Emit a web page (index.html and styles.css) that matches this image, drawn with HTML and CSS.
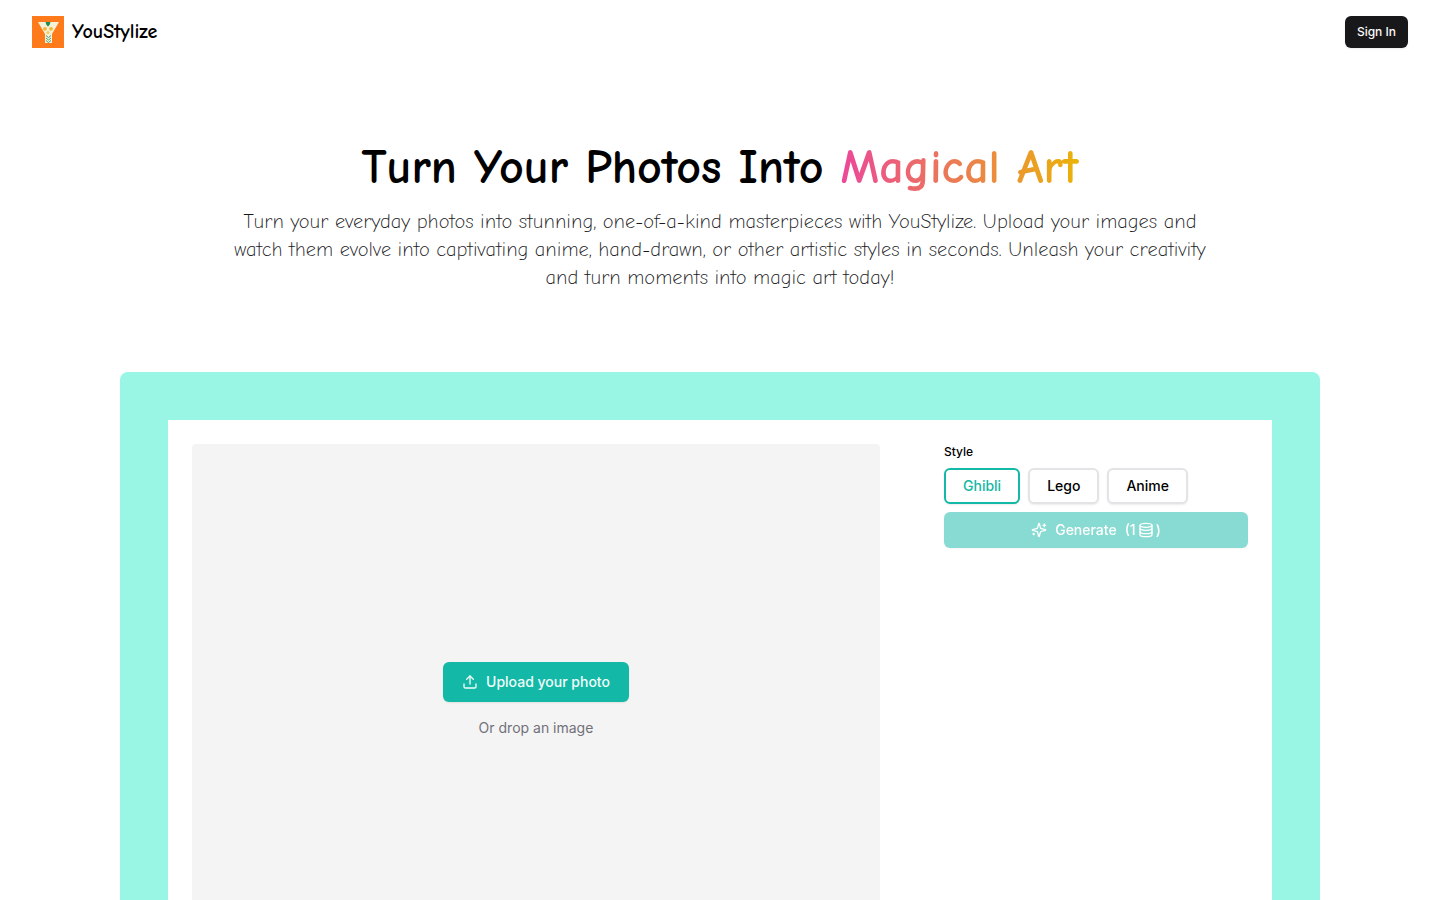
FILE: index.html
```html
<!DOCTYPE html>
<html lang="en">
<head>
  <meta charset="UTF-8">
  <meta name="viewport" content="width=device-width, initial-scale=1.0">
  <title>YouStylize</title>
  <link rel="stylesheet" href="styles.css">
</head>
<body>
  <header class="navbar">
    <a href="#" class="brand">
      <svg class="logo" viewBox="0 0 32 32" aria-hidden="true">
        <rect width="32" height="32" fill="#ff7a1a"/>
        <path d="M6 6h21l-7 12v9h-7v-9z" fill="#f5f0d8"/>
        <path d="M13.500 6h5l-1 3-1.500 1.500-1.500-1.500z" fill="#1f8a4c"/>
        <circle cx="13" cy="12.800" r="1.900" fill="#f9b52b"/>
        <circle cx="19" cy="12.800" r="1.900" fill="#f9b52b"/>
        <circle cx="16" cy="16.500" r="1.500" fill="#f9c85a"/>
        <path d="M14 19.500l2.500 2 2.500-2M14 22l2.500 2 2.500-2M14 24.500l2.500 2 2.500-2" fill="none" stroke="#4aa07a"/>
      </svg>
      <span>YouStylize</span>
    </a>
    <button type="button" class="btn btn-dark">Sign In</button>
  </header>

  <main>
    <section class="hero">
      <h1>Turn Your Photos Into <span class="gradient-text">Magical Art</span></h1>
      <p>Turn your everyday photos into stunning, one-of-a-kind masterpieces with YouStylize. Upload your images and watch them evolve into captivating anime, hand-drawn, or other artistic styles in seconds. Unleash your creativity and turn moments into magic art today!</p>
    </section>

    <section class="studio">
      <div class="panel">
        <div class="dropzone">
          <button type="button" class="btn btn-upload">
            <svg class="icon" viewBox="0 0 24 24" aria-hidden="true">
              <path d="M21 15v4a2 2 0 0 1-2 2H5a2 2 0 0 1-2-2v-4"/>
              <path d="M17 8l-5-5-5 5"/>
              <path d="M12 3v12"/>
            </svg>
            Upload your photo
          </button>
          <p>Or drop an image</p>
        </div>

        <div class="options">
          <h2 id="style-label">Style</h2>
          <div class="style-list" role="group" aria-labelledby="style-label">
            <button type="button" class="btn btn-style active" aria-pressed="true">Ghibli</button>
            <button type="button" class="btn btn-style" aria-pressed="false">Lego</button>
            <button type="button" class="btn btn-style" aria-pressed="false">Anime</button>
          </div>
          <button type="button" class="btn btn-generate" disabled>
            <svg class="icon" viewBox="0 0 24 24" aria-hidden="true">
              <path d="M9.937 15.500A2 2 0 0 0 8.500 14.063l-6.135-1.582a.5.5 0 0 1 0-.962L8.500 9.936A2 2 0 0 0 9.937 8.500l1.582-6.135a.5.5 0 0 1 .963 0L14.063 8.500A2 2 0 0 0 15.500 9.937l6.135 1.581a.5.5 0 0 1 0 .964L15.500 14.063a2 2 0 0 0-1.437 1.437l-1.582 6.135a.5.5 0 0 1-.963 0z"/>
              <path d="M20 3v4M22 5h-4M4 17v2M5 18H3"/>
            </svg>
            <span>Generate</span>
            <span class="cost">(1<svg class="icon" viewBox="0 0 24 24" aria-hidden="true">
              <ellipse cx="12" cy="5" rx="9" ry="3"/>
              <path d="M3 5v14a9 3 0 0 0 18 0V5"/>
              <path d="M3 9.500a9 3 0 0 0 18 0"/>
              <path d="M3 14.500a9 3 0 0 0 18 0"/>
            </svg>)</span>
          </button>
        </div>
      </div>
    </section>
  </main>
</body>
</html>
```

FILE: styles.css
```css
* {
  box-sizing: border-box;
}

body {
  margin: 0;
  background: #fff;
  color: #000;
  font-family: Inter, sans-serif;
  font-size: 14px;
  line-height: 20px;
}

h1, h2, p {
  margin: 0;
}

.navbar {
  display: flex;
  align-items: center;
  justify-content: space-between;
  height: 64px;
  padding: 0 32px;
}

.brand {
  display: flex;
  align-items: center;
  gap: 8px;
  color: #000;
  font-family: "Comic Neue", Lato, sans-serif;
  font-size: 20px;
  font-weight: 700;
  text-decoration: none;
}

.logo {
  width: 32px;
  height: 32px;
}

.btn {
  display: inline-flex;
  align-items: center;
  justify-content: center;
  gap: 8px;
  height: 36px;
  padding: 0 17px;
  border: none;
  border-radius: 6px;
  font: 500 14px/20px Inter, sans-serif;
  box-shadow: 0 1px 2px rgba(0, 0, 0, 0.08);
  cursor: pointer;
}

.btn-dark {
  height: 32px;
  padding: 0 12px;
  background: #18181b;
  color: #fafafa;
  font-size: 12px;
}

.icon {
  width: 16px;
  height: 16px;
  fill: none;
  stroke: currentColor;
  stroke-width: 2;
  stroke-linecap: round;
  stroke-linejoin: round;
}

.hero {
  max-width: 1024px;
  margin: 0 auto;
  padding: 80px 24px;
  text-align: center;
  font-family: "Comic Neue", Lato, sans-serif;
}

.hero h1 {
  margin-bottom: 16px;
  font-size: 48px;
  line-height: 48px;
  font-weight: 700;
}

.gradient-text {
  background: linear-gradient(to right, #ec4899, #eab308);
  -webkit-background-clip: text;
  background-clip: text;
  color: transparent;
}

.hero p {
  color: #18181b;
  font-size: 20px;
  font-weight: 300;
  line-height: 28px;
}

.studio {
  max-width: 1200px;
  margin: 0 auto;
  padding: 48px;
  background: #99f6e4;
  border-radius: 8px;
}

.panel {
  display: grid;
  grid-template-columns: 1fr 304px;
  gap: 64px;
  padding: 24px;
  background: #fff;
}

.dropzone {
  display: flex;
  flex-direction: column;
  align-items: center;
  justify-content: center;
  gap: 16px;
  min-height: 512px;
  background: #f4f4f4;
  border-radius: 4px;
}

.dropzone p {
  color: #71717a;
}

.btn-upload {
  height: 40px;
  padding: 0 19px;
  background: #14b8a6;
  color: #f0fdfa;
}

.options {
  display: flex;
  flex-direction: column;
  gap: 8px;
}

.options h2 {
  font-size: 12px;
  font-weight: 500;
  line-height: 16px;
}

.style-list {
  display: flex;
  gap: 8px;
}

.btn-style {
  border: 2px solid #e4e4e7;
  background: #fff;
  color: #000;
}

.btn-style.active {
  border-color: #14b8a6;
  color: #14b8a6;
}

.btn-generate {
  background: #14b8a6;
  color: #fff;
  opacity: 0.5;
}

.cost {
  display: inline-flex;
  align-items: center;
  gap: 2px;
}
```
